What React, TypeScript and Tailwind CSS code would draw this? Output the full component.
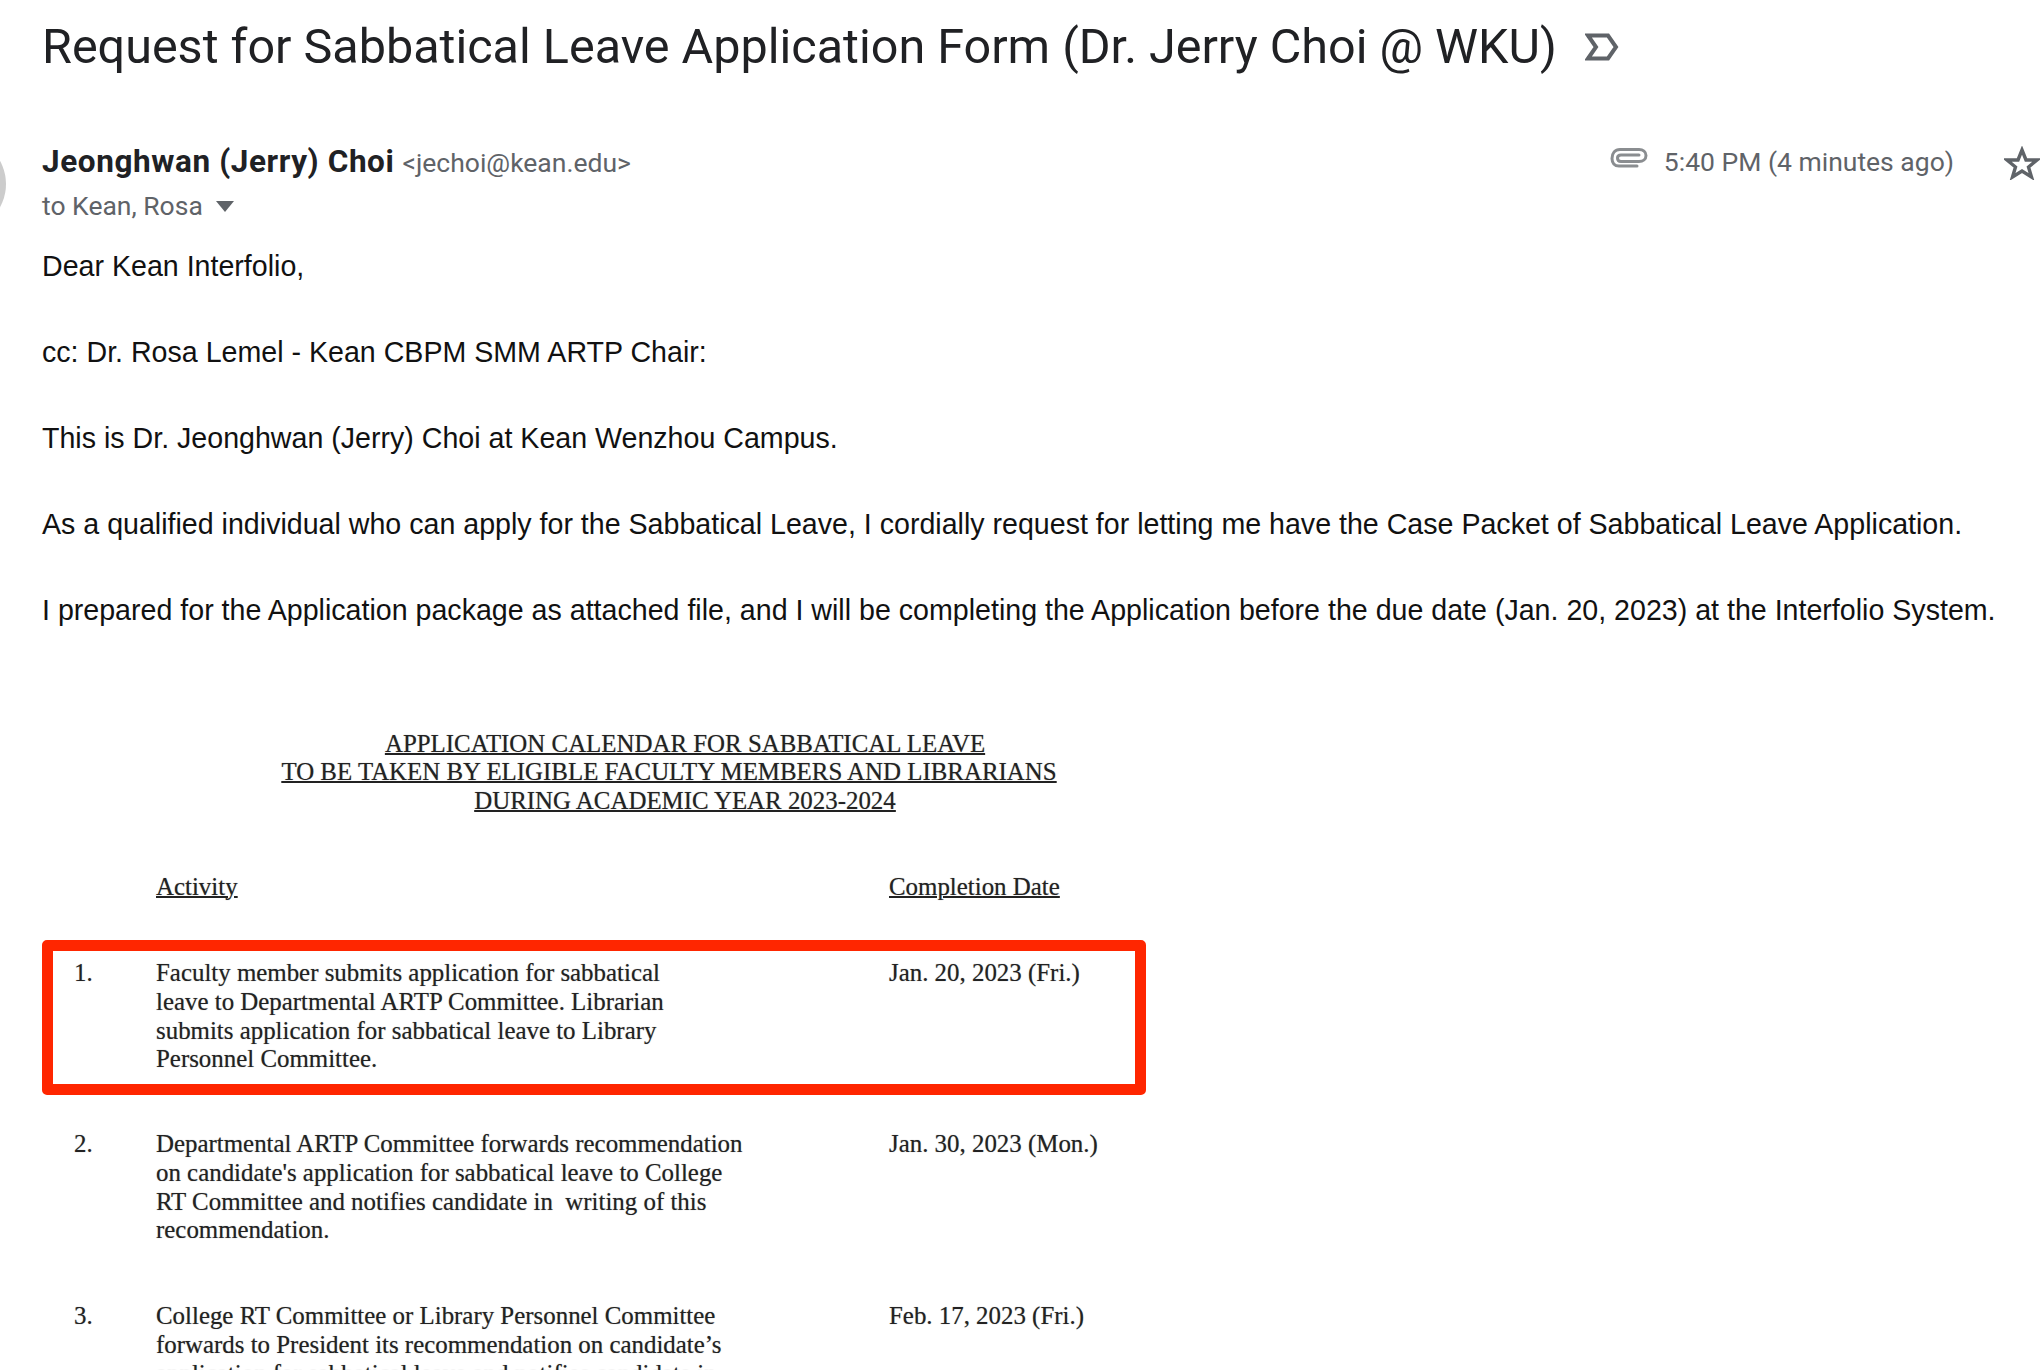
import React from 'react';

const bodyLines = [
  'Dear Kean Interfolio,',
  'cc: Dr. Rosa Lemel - Kean CBPM SMM ARTP Chair:',
  'This is Dr. Jeonghwan (Jerry) Choi at Kean Wenzhou Campus.',
  'As a qualified individual who can apply for the Sabbatical Leave, I cordially request for letting me have the Case Packet of Sabbatical Leave Application.',
  'I prepared for the Application package as attached file, and I will be completing the Application before the due date (Jan. 20, 2023) at the Interfolio System.',
];

const rowText = "font-['Liberation_Serif',serif] text-[24.9px] leading-[28.7px] text-[#222] whitespace-pre [text-shadow:0_0_1px_rgba(0,0,0,0.4)]";

const CalendarRow: React.FC<{ num: string; lines: string[]; date: string }> = ({ num, lines, date }) => (
  <div className={`flex ${rowText}`}>
    <div className="w-[114px] pl-[32px]">{num}</div>
    <div className="w-[733px]">
      {lines.map((l) => (
        <div key={l}>{l}</div>
      ))}
    </div>
    <div>{date}</div>
  </div>
);

export default function App() {
  return (
    <div className="relative h-[1370px] w-[2040px] overflow-hidden bg-white pl-[42px]">
      {/* avatar cut off by the crop */}
      <div className="absolute left-[-90px] top-[136px] h-[96px] w-[96px] rounded-full bg-[#cccccc]" />

      <div className="flex h-[94px] items-center">
        <h1 className="font-['Roboto',sans-serif] text-[48.5px] font-normal leading-none text-[#202124]">
          Request for Sabbatical Leave Application Form (Dr. Jerry Choi @ WKU)
        </h1>
        <svg className="ml-[28px] mt-[-1px] h-[28px] w-[34px]" viewBox="0 0 34 28" fill="none" stroke="#5f6368" strokeWidth="4">
          <path d="M3 2.5H23L31 14L23 25.5H3L11 14Z" />
        </svg>
      </div>

      <div className="mt-[47px] flex h-[40px] items-center justify-between">
        <div className="mt-[2px] flex items-baseline font-['Roboto',sans-serif]">
          <span className="text-[31.5px] font-bold tracking-[0.6px] text-[#202124]">Jeonghwan (Jerry) Choi</span>
          <span className="ml-[8px] text-[26.5px] text-[#5f6368]">&lt;jechoi@kean.edu&gt;</span>
        </div>
        <div className="flex items-center font-['Roboto',sans-serif] text-[26.5px] text-[#5f6368]">
          <svg className="mt-[-6px] h-[22px] w-[38px]" viewBox="0 0 38 22" fill="none" stroke="#8a8d90" strokeWidth="3" strokeLinecap="round">
            <path d="M27 19H9C4.5 19 2 16 2 11.5C2 6 5 2.5 10 2.5H29C33 2.5 36 5 36 8.5C36 12 33 14.5 29 14.5H11C8.5 14.5 7.5 13 7.5 11C7.5 9 9 8 11 8H29" />
          </svg>
          <span className="ml-[16px] mt-[1px]">5:40 PM (4 minutes ago)</span>
          <svg className="ml-[50px] mt-[3px] h-[34px] w-[36px]" viewBox="0 0 36 34" fill="none" stroke="#5f6368" strokeWidth="3.4">
            <path d="M18 4L22 14H33L24.5 21L27.5 31L18 25L8.5 31L11.5 21L3 14H14Z" />
          </svg>
        </div>
      </div>

      <div className="mt-[6px] flex h-[38px] items-center font-['Roboto',sans-serif] text-[26.5px] text-[#5f6368]">
        <span>to Kean, Rosa</span>
        <svg className="ml-[13px] h-[11px] w-[18px]" viewBox="0 0 18 11" fill="#5f6368">
          <path d="M0 0H18L9 11Z" />
        </svg>
      </div>

      <div className="mt-[-2.5px] font-['Liberation_Sans',sans-serif] text-[28.6px] leading-[86px] text-[#111] whitespace-nowrap">
        {bodyLines.map((l) => (
          <div key={l}>{l}</div>
        ))}
      </div>

      <div className={`mt-[77px] w-[1286px] text-center underline decoration-[2px] ${rowText}`}>
        <div>APPLICATION CALENDAR FOR SABBATICAL LEAVE</div>
        <div className="pr-[32px]">TO BE TAKEN BY ELIGIBLE FACULTY MEMBERS AND LIBRARIANS</div>
        <div>DURING ACADEMIC YEAR 2023-2024</div>
      </div>

      <div className={`mt-[57px] flex underline decoration-[2px] ${rowText}`}>
        <div className="ml-[114px] w-[733px]">Activity</div>
        <div>Completion Date</div>
      </div>

      <div className="mt-[39px] h-[155px] w-[1104px] rounded-[5px] border-[11px] border-[#ff2600] pt-[8px]">
        <div className="ml-[-11px]">
          <CalendarRow
            num="1."
            lines={[
              'Faculty member submits application for sabbatical',
              'leave to Departmental ARTP Committee. Librarian',
              'submits application for sabbatical leave to Library',
              'Personnel Committee.',
            ]}
            date="Jan. 20, 2023 (Fri.)"
          />
        </div>
      </div>

      <div className="mt-[35px]">
        <CalendarRow
          num="2."
          lines={[
            'Departmental ARTP Committee forwards recommendation',
            "on candidate's application for sabbatical leave to College",
            'RT Committee and notifies candidate in  writing of this',
            'recommendation.',
          ]}
          date="Jan. 30, 2023 (Mon.)"
        />
      </div>

      <div className="mt-[57px]">
        <CalendarRow
          num="3."
          lines={[
            'College RT Committee or Library Personnel Committee',
            'forwards to President its recommendation on candidate’s',
            'application for sabbatical leave and notifies candidate in',
          ]}
          date="Feb. 17, 2023 (Fri.)"
        />
      </div>
    </div>
  );
}
